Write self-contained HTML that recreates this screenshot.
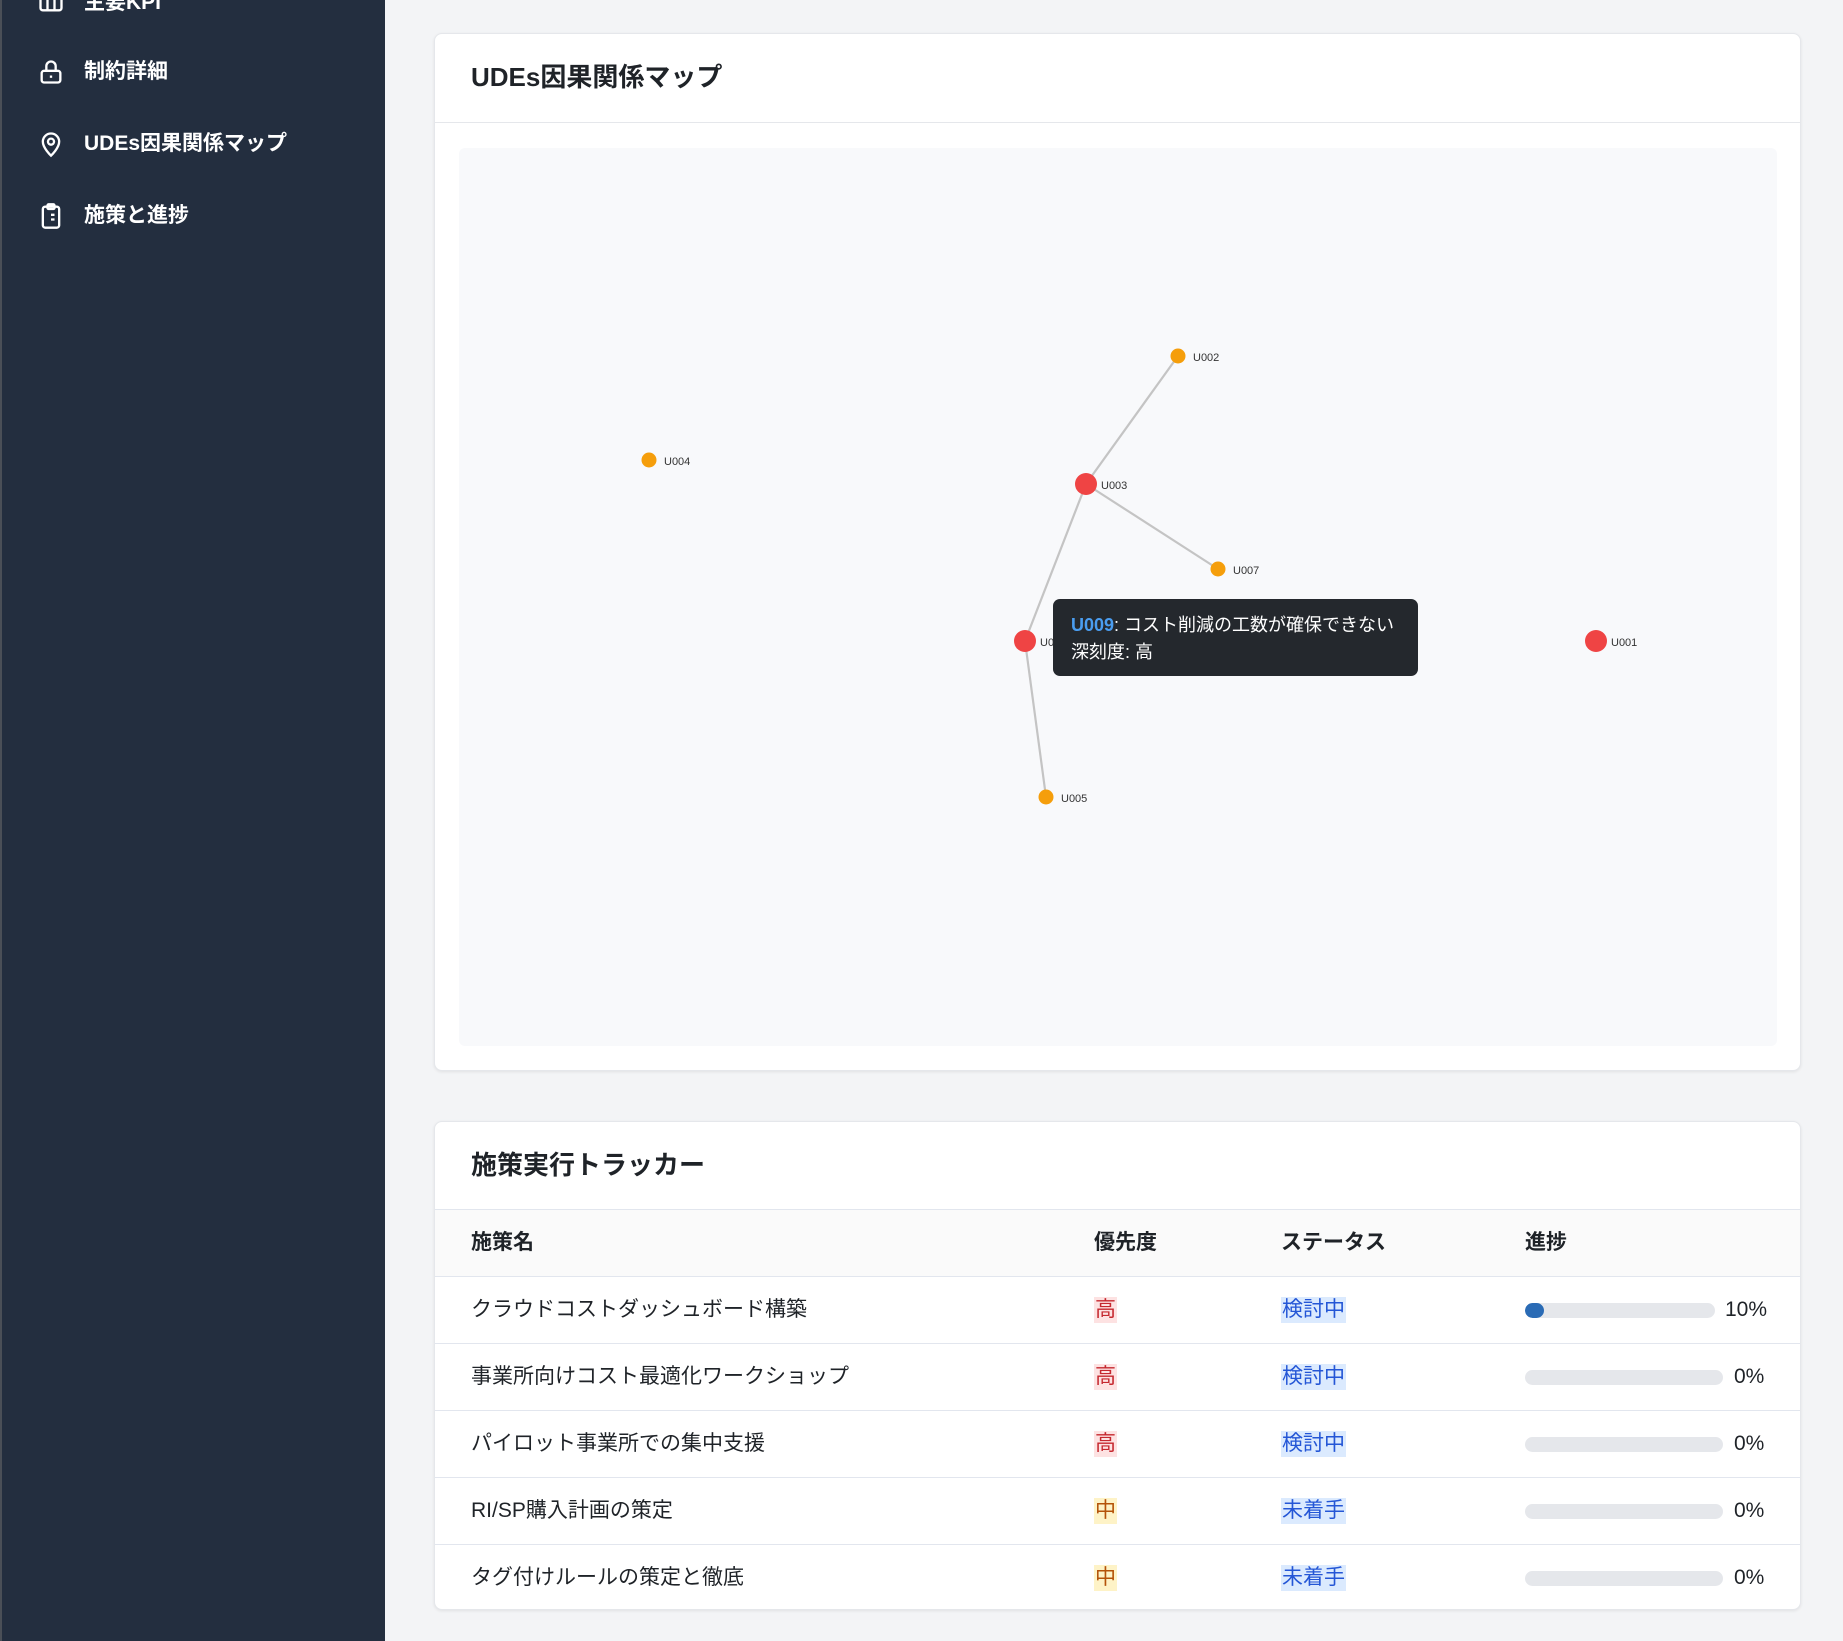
<!DOCTYPE html>
<html><head><meta charset="utf-8"><style>
*{margin:0;padding:0;box-sizing:border-box}
body{width:1843px;height:1641px;overflow:hidden;background:#f3f4f6;font-family:"Liberation Sans","Noto Sans CJK JP",sans-serif;color:#1f2328;position:relative}
.sb{position:absolute;left:0;top:0;width:385px;height:1641px;background:#232e3f;border-left:2px solid #4a4f57}
.it{position:absolute;left:82px;color:#fff;font-size:21px;font-weight:700;line-height:28px}
.ic{position:absolute;left:35px;width:28px;height:28px}
.card{position:absolute;left:434px;width:1367px;background:#fff;border:1px solid #e5e7eb;border-radius:8px;box-shadow:0 1px 3px rgba(0,0,0,.08)}
.ttl{position:absolute;left:36px;font-size:26px;font-weight:700}
.row{position:absolute;left:0;width:1365px;height:67px;border-top:1px solid #e2e6ee;font-size:21px}
.row span{position:absolute;top:20px;line-height:26px}
.b{padding:0 1px}
.bar{position:absolute;top:26px;height:15px;background:#e5e7eb;border-radius:8px;overflow:hidden}
</style></head><body>
<div class="sb">
<svg class="ic" style="top:-13px" viewBox="0 0 24 24" fill="none" stroke="#fff" stroke-width="2"><rect x="3" y="4" width="18" height="16" rx="2"/><path d="M9 10v10M15 10v10"/></svg>
<div class="it" style="top:-11px">主要KPI</div>
<svg class="ic" style="top:58px" viewBox="0 0 24 24" fill="none" stroke="#fff" stroke-width="2"><rect x="4" y="11" width="16" height="10" rx="2"/><path d="M8 11V7a4 4 0 0 1 8 0v4"/><path d="M12 15v2"/></svg>
<div class="it" style="top:58px">制約詳細</div>
<svg class="ic" style="top:130px" viewBox="0 0 24 24" fill="none" stroke="#fff" stroke-width="2"><path d="M12 22s7-6.5 7-12a7 7 0 0 0-14 0c0 5.5 7 12 7 12z"/><circle cx="12" cy="10" r="2.6"/></svg>
<div class="it" style="top:130px">UDEs因果関係マップ</div>
<svg class="ic" style="top:202px" viewBox="0 0 24 24" fill="none" stroke="#fff" stroke-width="2"><rect x="5" y="4" width="14" height="18" rx="2"/><rect x="9" y="2" width="6" height="4" rx="1"/><path d="M9 11h.01M12 11h3M9 15h.01M12 15h3"/></svg>
<div class="it" style="top:202px">施策と進捗</div>
</div>

<div class="card" style="top:33px;height:1038px">
<div class="ttl" style="top:23px">UDEs因果関係マップ</div>
<div style="position:absolute;left:0;top:88px;width:1365px;border-top:1px solid #e5e7eb"></div>
<div style="position:absolute;left:24px;top:114px;width:1318px;height:898px;background:#f8f9fb;border-radius:6px"></div>
</div>
<svg style="position:absolute;left:0;top:0" width="1843" height="1641">
<g stroke="#c4c4c4" stroke-width="2.2"><line x1="1086" y1="484" x2="1178" y2="356"/><line x1="1086" y1="484" x2="1218" y2="569"/><line x1="1086" y1="484" x2="1025" y2="641"/><line x1="1025" y1="641" x2="1046" y2="797"/></g>
<g fill="#f59e0b"><circle cx="1178" cy="356" r="7.5"/><circle cx="649" cy="460" r="7.5"/><circle cx="1218" cy="569" r="7.5"/><circle cx="1046" cy="797" r="7.5"/></g>
<g fill="#ef4444"><circle cx="1086" cy="484" r="11"/><circle cx="1025" cy="641" r="11"/><circle cx="1596" cy="641" r="11"/></g>
<g font-size="11" fill="#333" font-family="Liberation Sans,sans-serif"><text x="1193" y="361">U002</text><text x="664" y="465">U004</text><text x="1101" y="489">U003</text><text x="1233" y="574">U007</text><text x="1040" y="646">U009</text><text x="1611" y="646">U001</text><text x="1061" y="802">U005</text></g>
</svg>
<div style="position:absolute;left:1053px;top:599px;width:365px;height:77px;background:#24282d;border-radius:7px;color:#fff;font-size:18px;line-height:27px;padding:13px 18px">
<div><b style="color:#4a9df0">U009</b>: コスト削減の工数が確保できない</div><div>深刻度: 高</div></div>

<div class="card" style="top:1121px;height:489px">
<div class="ttl" style="top:23px">施策実行トラッカー</div>
<div class="row" style="top:87px;background:#fafafa;font-weight:700;height:68px"><span style="left:36px">施策名</span><span style="left:659px">優先度</span><span style="left:846px">ステータス</span><span style="left:1090px">進捗</span></div>
<div class="row" style="top:154px"><span style="left:36px">クラウドコストダッシュボード構築</span><span class="b" style="left:659px;background:#fde2e2;color:#c5282f">高</span><span class="b" style="left:846px;background:#dbeafe;color:#2456d6">検討中</span><div class="bar" style="left:1090px;width:190px"><div style="width:19px;height:15px;background:#2a6bb5;border-radius:8px"></div></div><span style="left:1290px">10%</span></div>
<div class="row" style="top:221px"><span style="left:36px">事業所向けコスト最適化ワークショップ</span><span class="b" style="left:659px;background:#fde2e2;color:#c5282f">高</span><span class="b" style="left:846px;background:#dbeafe;color:#2456d6">検討中</span><div class="bar" style="left:1090px;width:198px"></div><span style="left:1299px">0%</span></div>
<div class="row" style="top:288px"><span style="left:36px">パイロット事業所での集中支援</span><span class="b" style="left:659px;background:#fde2e2;color:#c5282f">高</span><span class="b" style="left:846px;background:#dbeafe;color:#2456d6">検討中</span><div class="bar" style="left:1090px;width:198px"></div><span style="left:1299px">0%</span></div>
<div class="row" style="top:355px"><span style="left:36px">RI/SP購入計画の策定</span><span class="b" style="left:659px;background:#fef3c7;color:#b45309">中</span><span class="b" style="left:846px;background:#dbeafe;color:#2456d6">未着手</span><div class="bar" style="left:1090px;width:198px"></div><span style="left:1299px">0%</span></div>
<div class="row" style="top:422px"><span style="left:36px">タグ付けルールの策定と徹底</span><span class="b" style="left:659px;background:#fef3c7;color:#b45309">中</span><span class="b" style="left:846px;background:#dbeafe;color:#2456d6">未着手</span><div class="bar" style="left:1090px;width:198px"></div><span style="left:1299px">0%</span></div>
</div>
</body></html>
